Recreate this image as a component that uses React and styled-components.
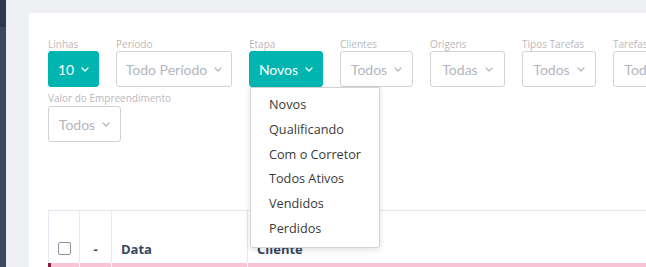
import React from "react";
import styled, { createGlobalStyle } from "styled-components";

const Global = createGlobalStyle`
  html, body { margin: 0; padding: 0; height: 100%; overflow: hidden; }
  body { font-family: "Open Sans", "Noto Sans", sans-serif; background: #eff0f4; }
  #root { height: 100%; }
`;

const Shell = styled.div`
  display: flex;
  height: 267px;
  width: 646px;
  overflow: hidden;
`;

const Sidebar = styled.div`
  width: 6px;
  flex: none;
  background: linear-gradient(#2f3a52 0, #2f3a52 27px, #3c4762 27px);
`;

const Main = styled.div`
  flex: 1;
  background: #eff0f4;
  padding: 13px 0 0 23px;
  overflow: hidden;
  display: flex;
`;

const Card = styled.div`
  position: relative;
  background: #fff;
  width: 1000px;
  flex: none;
  padding: 24px 0 0 19px;
  box-sizing: border-box;
`;

const FilterRow = styled.div`
  display: flex;
  gap: 17px;
  margin-bottom: ${(p) => p.$mb || 0}px;
`;

const Field = styled.div`
  position: relative;
  display: flex;
  flex-direction: column;
`;

const Label = styled.div`
  font-size: 10px;
  line-height: 14px;
  margin-bottom: ${(p) => p.$gap || 0}px;
  color: #bcb7bb;
  white-space: nowrap;
`;

const Control = styled.div`
  box-sizing: border-box;
  height: 36px;
  width: ${(p) => p.$w}px;
  border-radius: 3px;
  display: flex;
  align-items: center;
  justify-content: center;
  gap: 7px;
  font-family: Lato, "Open Sans", sans-serif;
  font-size: 14px;
  white-space: nowrap;
  overflow: hidden;
  background: ${(p) => (p.$active ? "#00b4af" : "#fff")};
  color: ${(p) => (p.$active ? "#fff" : "#b3b6bf")};
  border: 1px solid ${(p) => (p.$active ? "#00b4af" : "#cfd2d8")};
`;

const Chevron = ({ color }) => (
  <svg width="8" height="5" viewBox="0 0 8 5" style={{ flex: "none" }}>
    <path d="M1 1 L4 4 L7 1" fill="none" stroke={color} strokeWidth="1.2" strokeLinecap="round" strokeLinejoin="round" />
  </svg>
);

const Menu = styled.div`
  position: absolute;
  top: 100%;
  left: 1px;
  width: 130px;
  box-sizing: border-box;
  padding: 4px 0 6px;
  background: #fff;
  border: 1px solid #d3d3d3;
  border-radius: 0 0 3px 3px;
  box-shadow: 0 2px 6px rgba(0, 0, 0, 0.12);
  z-index: 5;
`;

const MenuItem = styled.div`
  font-size: 12.7px;
  line-height: 24.8px;
  color: #3a3a3a;
  padding-left: 18px;
  white-space: nowrap;
`;

const Table = styled.div`
  margin-top: 68px;
  display: grid;
  grid-template-columns: 31px 32px 136px 1fr;
  border-top: 1px solid #e3e8f0;
  border-left: 1px solid #e3e8f0;
`;

const HeadCell = styled.div`
  height: 52px;
  box-sizing: border-box;
  border-right: 1px solid #e3e8f0;
  display: flex;
  align-items: flex-end;
  justify-content: ${(p) => (p.$center ? "center" : "flex-start")};
  padding: 0 ${(p) => (p.$center ? 0 : 9)}px 5px;
  font-weight: 700;
  font-size: 13px;
  color: #3a4660;
`;

const Check = styled.span`
  width: 11px;
  height: 11px;
  border: 1px solid #8f9299;
  border-radius: 2px;
  margin-bottom: 3px;
`;

const PinkCell = styled.div`
  height: 10px;
  background: #f8c3d4;
  border-right: 1px solid #fff;
  border-left: ${(p) => (p.$first ? "3px solid #8c1a45" : "none")};
  margin-left: ${(p) => (p.$first ? "-1px" : 0)};
`;

const etapas = ["Novos", "Qualificando", "Com o Corretor", "Todos Ativos", "Vendidos", "Perdidos"];

export default function App() {
  return (
    <>
      <Global />
      <Shell>
        <Sidebar />
        <Main>
          <Card>
            <FilterRow $mb={4}>
              <Field>
                <Label>Linhas</Label>
                <Control $active $w={51}>10 <Chevron color="#fff" /></Control>
              </Field>
              <Field>
                <Label>Período</Label>
                <Control $w={116}>Todo Período <Chevron color="#b3b6bf" /></Control>
              </Field>
              <Field>
                <Label>Etapa</Label>
                <Control $active $w={74}>Novos <Chevron color="#fff" /></Control>
                <Menu>
                  {etapas.map((e) => (
                    <MenuItem key={e}>{e}</MenuItem>
                  ))}
                </Menu>
              </Field>
              <Field>
                <Label>Clientes</Label>
                <Control $w={73}>Todos <Chevron color="#b3b6bf" /></Control>
              </Field>
              <Field>
                <Label>Origens</Label>
                <Control $w={75}>Todas <Chevron color="#b3b6bf" /></Control>
              </Field>
              <Field>
                <Label>Tipos Tarefas</Label>
                <Control $w={74}>Todos <Chevron color="#b3b6bf" /></Control>
              </Field>
              <Field>
                <Label>Tarefas</Label>
                <Control $w={74}>Todos <Chevron color="#b3b6bf" /></Control>
              </Field>
            </FilterRow>
            <FilterRow>
              <Field>
                <Label $gap={1}>Valor do Empreendimento</Label>
                <Control $w={73}>Todos <Chevron color="#b3b6bf" /></Control>
              </Field>
            </FilterRow>
            <Table>
              <HeadCell $center><Check /></HeadCell>
              <HeadCell $center>-</HeadCell>
              <HeadCell>Data</HeadCell>
              <HeadCell>Cliente</HeadCell>
              <PinkCell $first />
              <PinkCell />
              <PinkCell />
              <PinkCell />
            </Table>
          </Card>
        </Main>
      </Shell>
    </>
  );
}
